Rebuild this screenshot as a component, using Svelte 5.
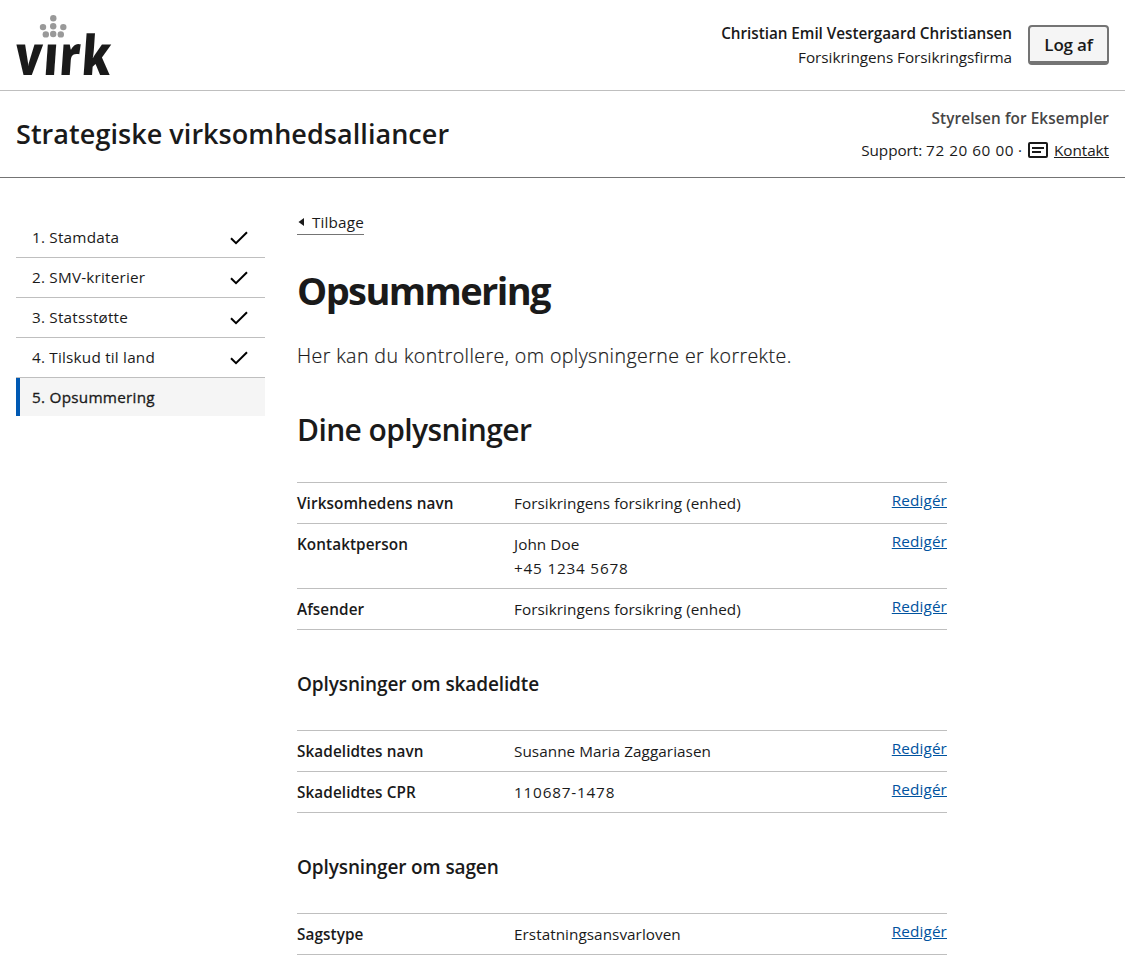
<script>
  const steps = [
    { label: '1. Stamdata', done: true },
    { label: '2. SMV-kriterier', done: true },
    { label: '3. Statsstøtte', done: true },
    { label: '4. Tilskud til land', done: true },
    { label: '5. Opsummering', done: false }
  ];

  const sections = [
    {
      title: 'Dine oplysninger',
      main: true,
      rows: [
        { key: 'Virksomhedens navn', values: ['Forsikringens forsikring (enhed)'] },
        { key: 'Kontaktperson', values: ['John Doe', '+45 1234 5678'] },
        { key: 'Afsender', values: ['Forsikringens forsikring (enhed)'] }
      ]
    },
    {
      title: 'Oplysninger om skadelidte',
      rows: [
        { key: 'Skadelidtes navn', values: ['Susanne Maria Zaggariasen'] },
        { key: 'Skadelidtes CPR', values: ['110687-1478'] }
      ]
    },
    {
      title: 'Oplysninger om sagen',
      rows: [{ key: 'Sagstype', values: ['Erstatningsansvarloven'] }]
    }
  ];

  const isNumeric = (value) => /^[+\d\s-]+$/.test(value);
</script>

<header>
  <div class="portal">
    <svg class="logo" width="120" height="90" viewBox="0 0 120 90" role="img" aria-label="virk">
      <g fill="#999">
        <circle cx="53.3" cy="18.2" r="3.2" />
        <circle cx="43" cy="27.1" r="3.2" />
        <circle cx="53.2" cy="26.2" r="3.2" />
        <circle cx="63.3" cy="27.1" r="3.2" />
        <circle cx="45.8" cy="34.4" r="3.2" />
        <circle cx="53.2" cy="34" r="3.2" />
        <circle cx="60.8" cy="34.4" r="3.2" />
      </g>
      <text class="wordmark" transform="translate(14.3 74.6) skewX(-4)" textLength="97" lengthAdjust="spacingAndGlyphs">vırk</text>
    </svg>
    <div class="account">
      <div class="user">
        <b>Christian Emil Vestergaard Christiansen</b>
        <span>Forsikringens Forsikringsfirma</span>
      </div>
      <button>Log af</button>
    </div>
  </div>
  <div class="solution">
    <p class="solution-name">Strategiske virksomhedsalliancer</p>
    <div class="authority">
      <b>Styrelsen for Eksempler</b>
      <div class="support">
        <span>Support: <span class="phone">72 20 60 00</span> ·</span>
        <svg width="20" height="16" viewBox="0 0 20 16" fill="none" stroke="#1a1a1a" stroke-width="2">
          <rect x="1" y="1" width="18" height="14" rx="1" />
          <path d="M4 6h12M4 10h9" />
        </svg>
        <a href="#kontakt">Kontakt</a>
      </div>
    </div>
  </div>
</header>

<div class="page">
  <nav>
    {#each steps as step}
      <a class="step" class:current={!step.done} href="#trin">
        <span>{step.label}</span>
        {#if step.done}
          <svg width="18" height="14" viewBox="0 0 18 14" fill="none" stroke="#000" stroke-width="2">
            <path d="M1 7.3L6 12.2L17 1.2" />
          </svg>
        {/if}
      </a>
    {/each}
  </nav>
  <main>
    <a class="back" href="#tilbage">
      <svg width="6" height="8" viewBox="0 0 6 8"><path d="M6 0v8L.5 4z" fill="#1a1a1a" /></svg>
      <span>Tilbage</span>
    </a>
    <h1>Opsummering</h1>
    <p class="lead">Her kan du kontrollere, om oplysningerne er korrekte.</p>
    {#each sections as section}
      {#if section.main}
        <h2>{section.title}</h2>
      {:else}
        <h3>{section.title}</h3>
      {/if}
      <dl>
        {#each section.rows as row}
          <div class="row">
            <dt>{row.key}</dt>
            <dd>
              {#each row.values as value}
                <div class:numeric={isNumeric(value)}>{value}</div>
              {/each}
            </dd>
            <dd class="action"><a href="#rediger">Redigér</a></dd>
          </div>
        {/each}
      </dl>
    {/each}
  </main>
</div>

<style>
  :global(body) {
    margin: 0;
    background: #fff;
    overflow: hidden;
  }
  :global(#app) {
    height: 961px;
    overflow: hidden;
    font: 400 15.3px/24px 'Open Sans', 'Noto Sans', sans-serif;
    letter-spacing: 0.04px;
    color: #1a1a1a;
  }
  b,
  dt {
    font-weight: 600;
  }
  a {
    color: inherit;
  }
  .portal {
    display: flex;
    justify-content: space-between;
    height: 90px;
    padding-right: 16px;
    border-bottom: 1px solid #bfbfbf;
  }
  .logo {
    overflow: visible;
  }
  .wordmark {
    font: 800 55px 'Open Sans', sans-serif;
    letter-spacing: 2px;
    fill: #1a1a1a;
  }
  .account {
    display: flex;
    align-items: flex-start;
    gap: 16px;
    padding-top: 21px;
  }
  .user {
    display: flex;
    flex-direction: column;
    text-align: right;
    letter-spacing: -0.04px;
  }
  button {
    box-sizing: border-box;
    width: 81px;
    height: 40px;
    margin-top: 4px;
    padding: 1px 0 0;
    border: 2px solid #747474;
    border-bottom-width: 4px;
    border-radius: 4px;
    background: #f5f5f5;
    color: #1a1a1a;
    font: 600 17px/33px 'Open Sans', sans-serif;
    letter-spacing: -0.2px;
  }
  .solution {
    display: flex;
    justify-content: space-between;
    height: 86px;
    padding: 0 16px;
    border-bottom: 1px solid #747474;
  }
  .solution-name {
    margin: 0;
    padding-top: 25px;
    font-size: 27px;
    line-height: 36px;
    font-weight: 600;
    letter-spacing: 0.05px;
  }
  .authority {
    padding-top: 15px;
    text-align: right;
  }
  .authority b {
    color: #454545;
    letter-spacing: 0.1px;
  }
  .support {
    display: flex;
    align-items: center;
    justify-content: flex-end;
    gap: 6px;
    margin-top: 8px;
    letter-spacing: -0.05px;
  }
  .phone {
    letter-spacing: 0.55px;
  }
  .numeric {
    letter-spacing: 0.8px;
  }
  .page {
    display: flex;
    gap: 32px;
    padding: 32px 16px 0;
  }
  nav {
    width: 249px;
    padding-top: 8px;
  }
  .step {
    display: flex;
    align-items: center;
    justify-content: space-between;
    height: 39px;
    padding: 0 17px 0 16px;
    border-bottom: 1px solid #bfbfbf;
    letter-spacing: 0.2px;
    text-decoration: none;
  }
  .step span {
    padding-bottom: 1px;
  }
  .step.current {
    height: 38px;
    padding-left: 12px;
    border-bottom: 0;
    border-left: 4px solid #0059b3;
    background: #f5f5f5;
    letter-spacing: 0.25px;
    -webkit-text-stroke: 0.3px #1a1a1a;
  }
  .step.current span {
    padding-bottom: 0;
  }
  main {
    width: 650px;
  }
  .back {
    display: flex;
    align-items: center;
    gap: 8px;
    width: fit-content;
    height: 24px;
    border-bottom: 1px solid #747474;
    letter-spacing: 0.15px;
    text-decoration: none;
  }
  .back svg {
    margin-left: 1px;
  }
  h1 {
    margin: 31px 0 0;
    font-size: 38px;
    line-height: 48px;
    font-weight: 700;
    letter-spacing: -1.6px;
  }
  .lead {
    margin: 26px 0 0;
    font-size: 19.6px;
    line-height: 32px;
    font-weight: 300;
    letter-spacing: 0.41px;
    -webkit-text-stroke: 0.2px #1a1a1a;
  }
  h2 {
    margin: 38px 0 32px;
    font-size: 30px;
    line-height: 40px;
    font-weight: 600;
    letter-spacing: -0.6px;
  }
  h3 {
    margin: 40px 0 32px;
    font-size: 19px;
    line-height: 28px;
    font-weight: 600;
    letter-spacing: -0.12px;
  }
  dl {
    margin: 0;
    border-top: 1px solid #bfbfbf;
  }
  .row {
    display: grid;
    grid-template-columns: 217px 1fr auto;
    padding: 8px 0;
    border-bottom: 1px solid #bfbfbf;
  }
  dt {
    letter-spacing: 0.08px;
  }
  dd {
    margin: 0;
  }
  .action {
    margin-top: -3px;
    letter-spacing: 0.12px;
  }
  .action a {
    color: #00539f;
  }
</style>
